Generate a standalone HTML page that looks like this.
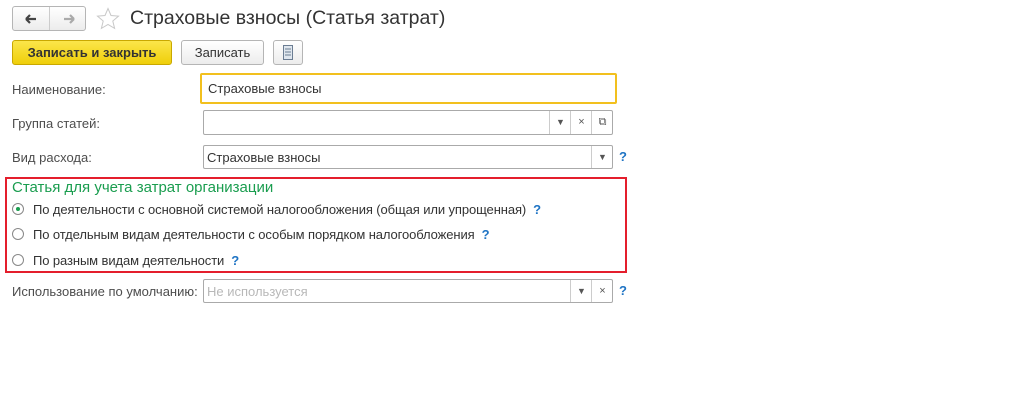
<!DOCTYPE html>
<html><head><meta charset="utf-8"><style>
body{margin:0;width:1011px;height:415px;background:#fff;font-family:"Liberation Sans",Arial,sans-serif;font-size:13px;color:#4d4d4d;position:relative;overflow:hidden}
.a{position:absolute}
.btn{position:absolute;border:1px solid #b5b5b5;border-radius:3px;background:linear-gradient(#fff,#ececec);box-sizing:border-box;text-align:center;line-height:23px;color:#333}
.inp{position:absolute;border:1px solid #aaa;border-radius:2px;box-sizing:border-box;background:#fff}
.lbl{position:absolute;left:12px;color:#4d4d4d}
.sb{position:absolute;top:0;bottom:0;width:21px;border-left:1px solid #ccc;text-align:center;font-size:9px;line-height:22px;color:#555}
.q{position:absolute;color:#1f74c4;font-weight:bold;font-size:13px}
.r{position:absolute;left:12px;width:12px;height:12px;border:1px solid #888;border-radius:50%;box-sizing:border-box;background:#fff}
.rt{position:absolute;left:33px;color:#333;letter-spacing:-0.1px}
</style></head><body>
<div class="btn" style="left:12px;top:6px;width:74px;height:25px"></div>
<div class="a" style="left:49px;top:7px;width:1px;height:23px;background:#ccc"></div>
<svg class="a" style="left:24px;top:13px" width="52" height="12"><path d="M2 6h10M2 6l4-4M2 6l4 4" stroke="#444" stroke-width="2.2" fill="none"/><path d="M40 6h10M50 6l-4-4M50 6l-4 4" stroke="#aaa" stroke-width="2.2" fill="none"/></svg>
<svg class="a" style="left:96px;top:7px" width="24" height="23"><path d="M12 1.5l3 7 7.5.6-5.7 4.9 1.8 7.4L12 17.5l-6.6 3.9 1.8-7.4L1.5 9.1 9 8.5z" fill="none" stroke="#c8c8c8" stroke-width="1"/></svg>
<div class="a" style="left:130px;top:7px;font-size:19.5px;color:#333">Страховые взносы (Статья затрат)</div>
<div class="btn" style="left:12px;top:40px;width:160px;height:25px;background:linear-gradient(#fbe64a,#efcf0a);border-color:#c9a800;font-weight:bold;color:#333">Записать и закрыть</div>
<div class="btn" style="left:181px;top:40px;width:83px;height:25px">Записать</div>
<div class="btn" style="left:273px;top:40px;width:30px;height:25px"></div>
<svg class="a" style="left:283px;top:45px" width="10" height="15"><rect x="0.5" y="0.5" width="9" height="14" fill="#dfe6ee" stroke="#6b7d93"/><path d="M2 4h6M2 7h6M2 10h6" stroke="#6b7d93"/></svg>
<div class="lbl" style="top:82px">Наименование:</div>
<div class="inp" style="left:200px;top:73px;width:417px;height:31px;border:2px solid #f2c01e"><span class="a" style="left:6px;top:6px;color:#333">Страховые взносы</span></div>
<div class="lbl" style="top:116px">Группа статей:</div>
<div class="inp" style="left:203px;top:110px;width:410px;height:25px"><div class="sb" style="left:345px">▼</div><div class="sb" style="left:366px;font-size:11px">×</div><div class="sb" style="left:387px;font-size:11px">⧉</div></div>
<div class="lbl" style="top:150px">Вид расхода:</div>
<div class="inp" style="left:203px;top:145px;width:410px;height:24px"><span class="a" style="left:3px;top:4px;color:#333">Страховые взносы</span><div class="sb" style="left:387px">▼</div></div>
<div class="q" style="left:619px;top:149px">?</div>
<div class="a" style="left:5px;top:177px;width:618px;height:92px;border:2px solid #e41e2c"></div>
<div class="a" style="left:12px;top:179px;font-size:15px;color:#1a9d4f">Статья для учета затрат организации</div>
<div class="r" style="top:203px"><div class="a" style="left:3px;top:3px;width:4px;height:4px;border-radius:50%;background:#1a9d4f"></div></div>
<div class="rt" style="top:202px">По деятельности с основной системой налогообложения (общая или упрощенная) <span style="color:#1f74c4;font-weight:bold">&nbsp;?</span></div>
<div class="r" style="top:228px"></div>
<div class="rt" style="top:227px">По отдельным видам деятельности с особым порядком налогообложения <span style="color:#1f74c4;font-weight:bold">&nbsp;?</span></div>
<div class="r" style="top:254px"></div>
<div class="rt" style="top:253px">По разным видам деятельности <span style="color:#1f74c4;font-weight:bold">&nbsp;?</span></div>
<div class="lbl" style="top:284px">Использование по умолчанию:</div>
<div class="inp" style="left:203px;top:279px;width:410px;height:24px"><span class="a" style="left:3px;top:4px;color:#b8b8b8">Не используется</span><div class="sb" style="left:366px">▼</div><div class="sb" style="left:387px;font-size:11px">×</div></div>
<div class="q" style="left:619px;top:283px">?</div>
</body></html>
